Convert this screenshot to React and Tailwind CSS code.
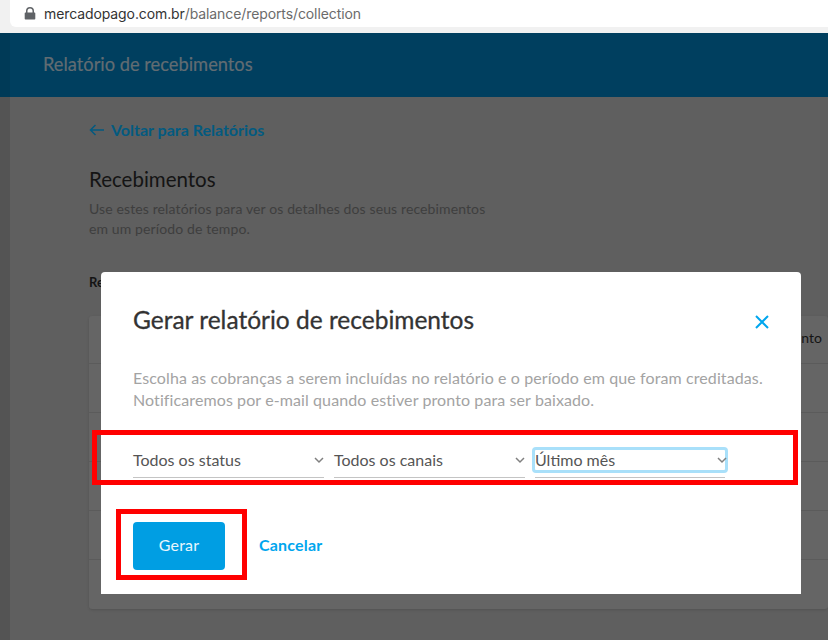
const rows = [0, 1, 2, 3, 4];

function Chevron({ className }) {
  return (
    <svg className={className} width="10" height="7" viewBox="0 0 10 7" fill="none" stroke="#808080" strokeWidth="1.5">
      <path d="M1 1l4 4 4-4" />
    </svg>
  );
}

function FilterSelect({ label, width, focused }) {
  return (
    <div className={`${width} relative h-[37px] border-b border-[#c4c4c4]`}>
      <div className={focused
        ? "absolute left-[-3px] right-[-3px] top-[6px] h-[26px] rounded-[4px] border-[3px] border-[#a9e0fa]"
        : "hidden"} />
      <span className="absolute left-0 top-[9px] text-[16px] leading-[20px] text-[#555555]">{label}</span>
      <Chevron className={focused ? "absolute right-[-2px] top-[16px]" : "absolute right-0 top-[16px]"} />
    </div>
  );
}

export default function App() {
  return (
    <div className="relative h-[640px] w-[828px] overflow-hidden bg-[#5f5f5f] font-['Lato',sans-serif]">
      {/* Browser bar */}
      <div className="h-[33px] bg-[#f1f1f1] pl-[10px]">
        <div className="flex h-[27px] items-center rounded-bl-[6px] bg-white pl-[14px] font-['Inter',sans-serif] text-[14px] tracking-[-0.1px]">
          <svg width="12" height="13" viewBox="0 0 12 13" fill="#606367">
            <path d="M2 5.5V4a4 4 0 0 1 8 0v1.500h.5a.8.8 0 0 1 .8.8v5.400a.8.8 0 0 1-.8.8h-9a.8.8 0 0 1-.8-.8V6.300a.8.8 0 0 1 .8-.8zm1.500 0h5V4a2.500 2.500 0 0 0-5 0z" />
          </svg>
          <span className="ml-[8px] text-[#333333]">mercadopago.com.br</span>
          <span className="text-[#6b6b6b]">/balance/reports/collection</span>
        </div>
      </div>

      {/* Page header */}
      <div className="flex h-[64px] items-center border-l-[10px] border-[#003a57] bg-[#003f5f] pl-[33px] text-[18.3px] font-normal text-[#626c72] [-webkit-text-stroke:0.2px_#626c72]">
        Relatório de recebimentos
      </div>

      {/* Page behind the overlay */}
      <div className="h-[543px] border-l-[10px] border-[#545454] pl-[79px]">
        <div className="flex items-center pt-[23px] text-[16px] font-bold leading-[20px] text-[#035a80]">
          <svg width="15" height="12" viewBox="0 0 15 12" fill="none" stroke="#035a80" strokeWidth="1.5">
            <path d="M15 6H1.500M6.500 1l-5 5 5 5" />
          </svg>
          <span className="ml-[7px]">Voltar para Relatórios</span>
        </div>
        <h1 className="mt-[27px] text-[20.5px] font-normal leading-[24px] text-[#141414]">Recebimentos</h1>
        <p className="mt-[8px] text-[14px] leading-[20px] tracking-[0.12px] text-[#3e3e3e]">
          Use estes relatórios para ver os detalhes dos seus recebimentos
          <br />
          em um período de tempo.
        </p>
        <div className="mt-[34px] text-[13px] font-bold leading-[18px] text-[#141414]">Re</div>
        <div className="mt-[25px] h-[293px] rounded-[3px] bg-[#656565] shadow-sm">
          <div className="flex h-[48px] items-center justify-end border-b border-[#5b5b5b] pb-[4px] pr-[6px] text-[14px] text-[#141414]">nto</div>
          {rows.map((row) => (
            <div key={row} className="h-[49px] border-b border-[#5b5b5b] last:border-b-0" />
          ))}
        </div>
      </div>

      {/* Modal */}
      <div className="absolute left-[101px] top-[272px] h-[322px] w-[700px] rounded-t-[4px] bg-white pl-[32px]">
        <div className="flex items-center justify-between pr-[32px] pt-[32px]">
          <h2 className="text-[24.5px] font-normal leading-[32px] text-[#333333] [-webkit-text-stroke:0.3px_#333333]">Gerar relatório de recebimentos</h2>
          <svg className="mt-[4px]" width="14" height="14" viewBox="0 0 14 14" fill="none" stroke="#00a6ee" strokeWidth="2">
            <path d="M1 1l12 12M13 1 1 13" />
          </svg>
        </div>
        <p className="mt-[31px] text-[16px] leading-[22px] tracking-[0.1px] text-[#a3a3a3]">
          Escolha as cobranças a serem incluídas no relatório e o período em que foram creditadas.
          <br />
          Notificaremos por e-mail quando estiver pronto para ser baixado.
        </p>
        <div className="mt-[30px] flex gap-[10px]">
          <FilterSelect label="Todos os status" width="w-[191px]" />
          <FilterSelect label="Todos os canais" width="w-[191px]" />
          <FilterSelect label="Último mês" width="w-[190px]" focused />
        </div>
        <div className="mt-[44px] flex items-center">
          <button className="h-[48px] w-[92px] rounded-[4px] bg-[#009ee3] pb-[2px] text-[16px] font-normal tracking-[0.2px] text-[#e8f6fd]">Gerar</button>
          <span className="mb-[2px] ml-[34px] text-[16px] font-bold tracking-[0.2px] text-[#00a6ee]">Cancelar</span>
        </div>
      </div>

      {/* Red annotations */}
      <div className="absolute left-[92px] top-[430px] h-[55px] w-[706px] border-[5px] border-[#ff0000]" />
      <div className="absolute left-[116px] top-[509px] h-[71px] w-[131px] border-[5px] border-[#ff0000]" />
    </div>
  );
}
